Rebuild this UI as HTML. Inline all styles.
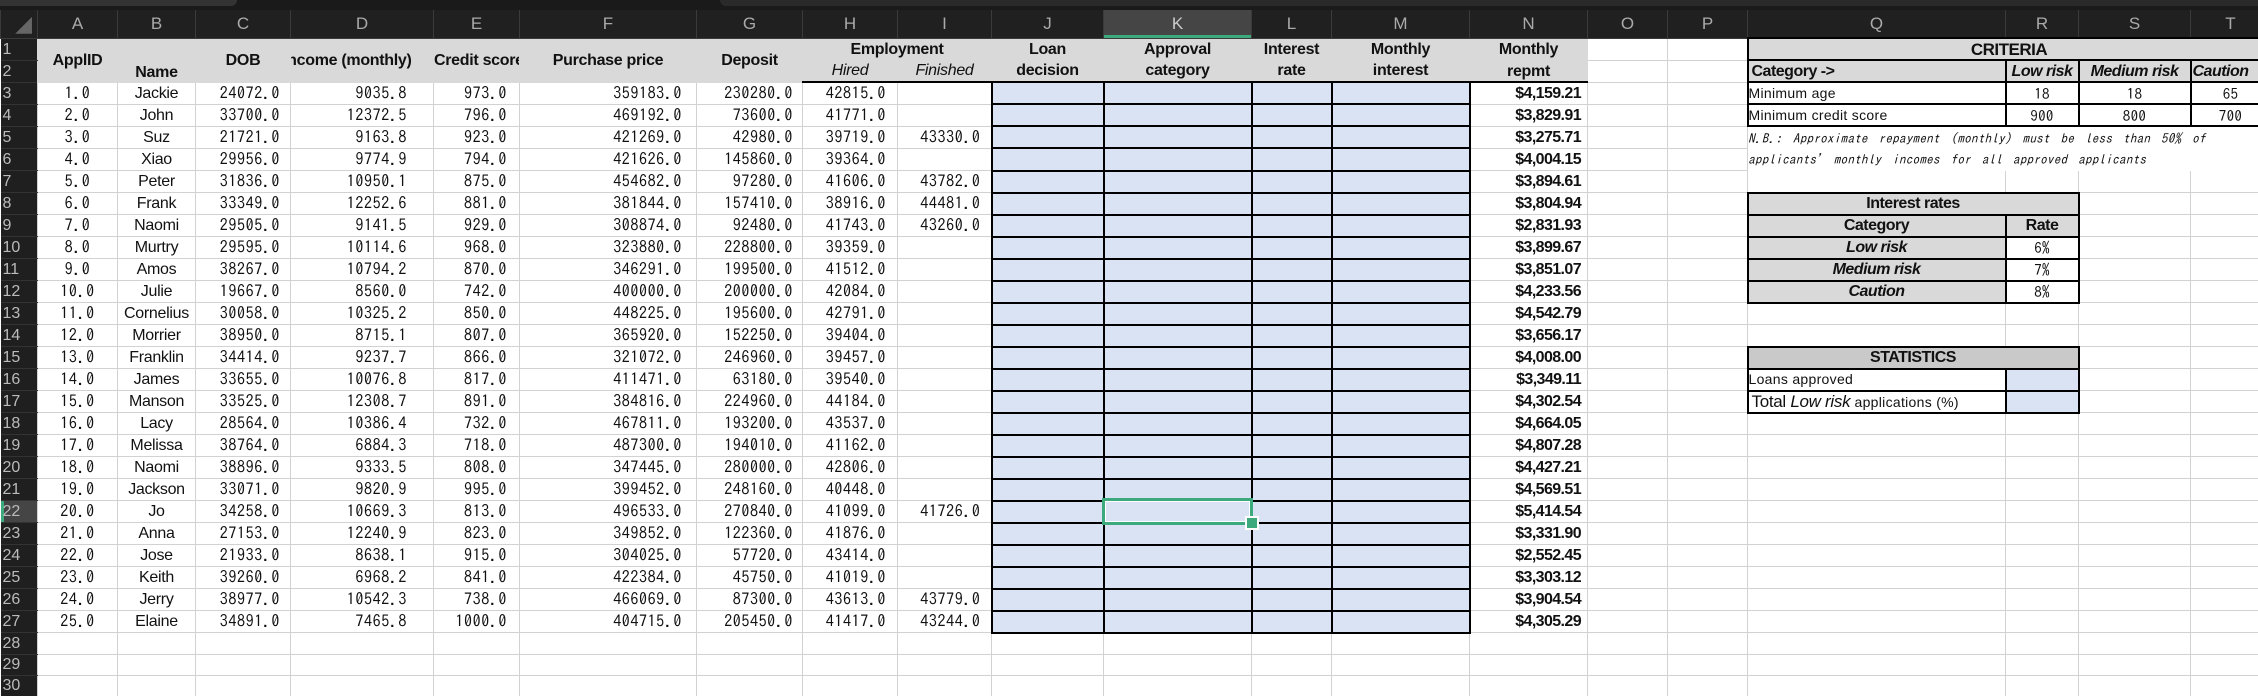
<!DOCTYPE html>
<html><head><meta charset="utf-8">
<style>
html,body{margin:0;padding:0;background:#fff;width:2258px;height:696px;overflow:hidden;position:relative}
#top{position:absolute;left:0;top:0;width:2258px;height:10px;background:#1a1a1a}
#tab{position:absolute;left:0;top:0;width:237px;height:6px;background:#333;border-radius:0 0 6px 0}
#tab2{position:absolute;left:720px;top:0;width:1538px;height:6px;background:#2a2a2a;border-radius:0 0 0 6px}
table{position:absolute;left:0;top:10px;border-collapse:collapse;table-layout:fixed;width:2270px}
td{border:1px solid #d2d2d2;padding:0;overflow:hidden;white-space:nowrap;height:20px;line-height:19px;font-family:"IPAGothic","Liberation Mono",monospace;font-size:16px;color:#111;letter-spacing:0.6px}
tr.ch td{background:#202020;color:#aaa;font-family:"Liberation Sans",sans-serif;font-size:17px;text-align:center;border:1px solid #3a3a3a;border-top:none;height:27px;letter-spacing:0}
tr.ch td:first-child{color:#666;font-size:22px;text-align:right;padding-right:5px}
tr.ch td.sel{background:#454545;box-shadow:inset 0 -3px 0 #3daa7d;color:#ccc}
td.rh{background:#1f1f1f;color:#bbb;font-family:"Liberation Sans",sans-serif;font-size:16px;border:none;border-bottom:1px solid #333;padding-left:2px;letter-spacing:0}
td.rh.sel{background:#454545;box-shadow:inset 3px 0 0 #3daa7d}
tr.hd td.g{background:#d9d9d9;font-family:"Liberation Sans",sans-serif;font-weight:bold;font-size:16px;text-align:center;border-color:#d9d9d9;letter-spacing:-0.3px;line-height:19px;color:#111}
tr.hd2 td.g{border-bottom:2px solid #000}
td.it{font-style:italic!important;font-weight:normal!important}
tr.d td:nth-child(2),tr.d td:nth-child(3){text-align:center}
tr.d td:nth-child(4){text-align:right;padding-right:10px}
tr.d td:nth-child(5){text-align:right;padding-right:26px}
tr.d td:nth-child(6){text-align:right;padding-right:12px}
tr.d td:nth-child(7){text-align:right;padding-right:14px}
tr.d td:nth-child(8){text-align:right;padding-right:9px}
tr.d td:nth-child(9){text-align:right;padding-right:11px}
tr.d td:nth-child(10){text-align:right;padding-right:10px}
tr.d td:nth-child(3){font-family:"Liberation Sans",sans-serif;font-size:16px;letter-spacing:-0.3px}
tr.d td:nth-child(11),tr.d td:nth-child(12),tr.d td:nth-child(13),tr.d td:nth-child(14){background:#dae3f3;border:2px solid #000}
tr.d td:nth-child(15){text-align:right;padding-right:6px;font-family:"Liberation Sans",sans-serif;font-weight:bold;font-size:16px;letter-spacing:-0.6px}
td.k{border:2px solid #000;font-family:"Liberation Sans",sans-serif;font-size:14px;letter-spacing:0.3px}
td.kg{background:#d9d9d9;font-weight:bold;font-size:16px;text-align:center;letter-spacing:-0.5px}
td.kd{background:#c9c9c9}
td.kc{text-align:center;font-family:"IPAGothic",sans-serif;font-size:15px}
td.kb{background:#dae3f3}
td.nb{font-family:"IPAGothic",sans-serif;font-style:italic;font-size:13px;line-height:21px;vertical-align:top;white-space:normal;border-color:transparent #d2d2d2;word-spacing:4px;letter-spacing:0.3px;padding-top:1px}
#selbox{position:absolute;left:1102px;top:498px;width:145px;height:21px;border:3px solid #3daa7d;box-shadow:inset 0 0 0 1px #fff}
#handle{position:absolute;left:1245px;top:516px;width:10px;height:10px;background:#3daa7d;border:2px solid #fff}
</style></head><body>
<div id="top"><div id="tab"></div><div id="tab2"></div></div>
<table>
<colgroup><col style="width:37px"><col style="width:80px"><col style="width:78px"><col style="width:95px"><col style="width:143px"><col style="width:86px"><col style="width:177px"><col style="width:106px"><col style="width:95px"><col style="width:94px"><col style="width:112px"><col style="width:148px"><col style="width:80px"><col style="width:138px"><col style="width:118px"><col style="width:80px"><col style="width:80px"><col style="width:258px"><col style="width:73px"><col style="width:112px"><col style="width:80px"></colgroup>
<tr class="ch"><td>◢</td><td>A</td><td>B</td><td>C</td><td>D</td><td>E</td><td>F</td><td>G</td><td>H</td><td>I</td><td>J</td><td class="sel">K</td><td>L</td><td>M</td><td>N</td><td>O</td><td>P</td><td>Q</td><td>R</td><td>S</td><td>T</td></tr>
<tr class="hd"><td class="rh">1</td><td class="g" rowspan="2">ApplID</td><td class="g" rowspan="2" style="vertical-align:bottom">Name</td><td class="g" rowspan="2">DOB</td><td class="g" rowspan="2" style="text-align:left;text-indent:-8px">Income (monthly)</td><td class="g" rowspan="2" style="text-align:left">Credit score</td><td class="g" rowspan="2">Purchase price</td><td class="g" rowspan="2">Deposit</td><td class="g" colspan="2">Employment</td><td class="g">Loan</td><td class="g">Approval</td><td class="g">Interest</td><td class="g">Monthly</td><td class="g">Monthly</td><td></td><td></td><td class="k kg" colspan="4" style="font-size:17px">CRITERIA</td></tr>
<tr class="hd hd2"><td class="rh">2</td><td class="g it">Hired</td><td class="g it">Finished</td><td class="g">decision</td><td class="g">category</td><td class="g">rate</td><td class="g">interest</td><td class="g" style="vertical-align:bottom">repmt</td><td></td><td></td><td class="k kg" style="text-align:left;padding-left:3px">Category -&gt;</td><td class="k kg" style="font-style:italic">Low risk</td><td class="k kg" style="font-style:italic">Medium risk</td><td class="k kg" style="font-style:italic;text-align:left;padding-left:1px">Caution</td></tr>
<tr class="d"><td class="rh">3</td><td>1.0</td><td>Jackie</td><td>24072.0</td><td>9035.8</td><td>973.0</td><td>359183.0</td><td>230280.0</td><td>42815.0</td><td></td><td></td><td></td><td></td><td></td><td>$4,159.21</td><td></td><td></td><td class="k">Minimum age</td><td class="k kc">18</td><td class="k kc">18</td><td class="k kc">65</td></tr>
<tr class="d"><td class="rh">4</td><td>2.0</td><td>John</td><td>33700.0</td><td>12372.5</td><td>796.0</td><td>469192.0</td><td>73600.0</td><td>41771.0</td><td></td><td></td><td></td><td></td><td></td><td>$3,829.91</td><td></td><td></td><td class="k">Minimum credit score</td><td class="k kc">900</td><td class="k kc">800</td><td class="k kc">700</td></tr>
<tr class="d"><td class="rh">5</td><td>3.0</td><td>Suz</td><td>21721.0</td><td>9163.8</td><td>923.0</td><td>421269.0</td><td>42980.0</td><td>39719.0</td><td>43330.0</td><td></td><td></td><td></td><td></td><td>$3,275.71</td><td></td><td></td><td class="nb" colspan="4" rowspan="2">N.B.: Approximate repayment (monthly) must be less than 50% of applicants' monthly incomes for all approved applicants</td></tr>
<tr class="d"><td class="rh">6</td><td>4.0</td><td>Xiao</td><td>29956.0</td><td>9774.9</td><td>794.0</td><td>421626.0</td><td>145860.0</td><td>39364.0</td><td></td><td></td><td></td><td></td><td></td><td>$4,004.15</td><td></td><td></td></tr>
<tr class="d"><td class="rh">7</td><td>5.0</td><td>Peter</td><td>31836.0</td><td>10950.1</td><td>875.0</td><td>454682.0</td><td>97280.0</td><td>41606.0</td><td>43782.0</td><td></td><td></td><td></td><td></td><td>$3,894.61</td><td></td><td></td><td></td><td></td><td></td><td></td></tr>
<tr class="d"><td class="rh">8</td><td>6.0</td><td>Frank</td><td>33349.0</td><td>12252.6</td><td>881.0</td><td>381844.0</td><td>157410.0</td><td>38916.0</td><td>44481.0</td><td></td><td></td><td></td><td></td><td>$3,804.94</td><td></td><td></td><td class="k kg" colspan="2">Interest rates</td><td></td><td></td></tr>
<tr class="d"><td class="rh">9</td><td>7.0</td><td>Naomi</td><td>29505.0</td><td>9141.5</td><td>929.0</td><td>308874.0</td><td>92480.0</td><td>41743.0</td><td>43260.0</td><td></td><td></td><td></td><td></td><td>$2,831.93</td><td></td><td></td><td class="k kg">Category</td><td class="k kg">Rate</td><td></td><td></td></tr>
<tr class="d"><td class="rh">10</td><td>8.0</td><td>Murtry</td><td>29595.0</td><td>10114.6</td><td>968.0</td><td>323880.0</td><td>228800.0</td><td>39359.0</td><td></td><td></td><td></td><td></td><td></td><td>$3,899.67</td><td></td><td></td><td class="k kg" style="font-style:italic">Low risk</td><td class="k kc">6%</td><td></td><td></td></tr>
<tr class="d"><td class="rh">11</td><td>9.0</td><td>Amos</td><td>38267.0</td><td>10794.2</td><td>870.0</td><td>346291.0</td><td>199500.0</td><td>41512.0</td><td></td><td></td><td></td><td></td><td></td><td>$3,851.07</td><td></td><td></td><td class="k kg" style="font-style:italic">Medium risk</td><td class="k kc">7%</td><td></td><td></td></tr>
<tr class="d"><td class="rh">12</td><td>10.0</td><td>Julie</td><td>19667.0</td><td>8560.0</td><td>742.0</td><td>400000.0</td><td>200000.0</td><td>42084.0</td><td></td><td></td><td></td><td></td><td></td><td>$4,233.56</td><td></td><td></td><td class="k kg" style="font-style:italic">Caution</td><td class="k kc">8%</td><td></td><td></td></tr>
<tr class="d"><td class="rh">13</td><td>11.0</td><td>Cornelius</td><td>30058.0</td><td>10325.2</td><td>850.0</td><td>448225.0</td><td>195600.0</td><td>42791.0</td><td></td><td></td><td></td><td></td><td></td><td>$4,542.79</td><td></td><td></td><td></td><td></td><td></td><td></td></tr>
<tr class="d"><td class="rh">14</td><td>12.0</td><td>Morrier</td><td>38950.0</td><td>8715.1</td><td>807.0</td><td>365920.0</td><td>152250.0</td><td>39404.0</td><td></td><td></td><td></td><td></td><td></td><td>$3,656.17</td><td></td><td></td><td></td><td></td><td></td><td></td></tr>
<tr class="d"><td class="rh">15</td><td>13.0</td><td>Franklin</td><td>34414.0</td><td>9237.7</td><td>866.0</td><td>321072.0</td><td>246960.0</td><td>39457.0</td><td></td><td></td><td></td><td></td><td></td><td>$4,008.00</td><td></td><td></td><td class="k kg kd" colspan="2">STATISTICS</td><td></td><td></td></tr>
<tr class="d"><td class="rh">16</td><td>14.0</td><td>James</td><td>33655.0</td><td>10076.8</td><td>817.0</td><td>411471.0</td><td>63180.0</td><td>39540.0</td><td></td><td></td><td></td><td></td><td></td><td>$3,349.11</td><td></td><td></td><td class="k">Loans approved</td><td class="k kb"></td><td></td><td></td></tr>
<tr class="d"><td class="rh">17</td><td>15.0</td><td>Manson</td><td>33525.0</td><td>12308.7</td><td>891.0</td><td>384816.0</td><td>224960.0</td><td>44184.0</td><td></td><td></td><td></td><td></td><td></td><td>$4,302.54</td><td></td><td></td><td class="k" style="padding-left:3px"><span style="font-family:'Liberation Sans',sans-serif;font-size:17px;letter-spacing:-0.3px">Total <i>Low risk</i></span> applications (%)</td><td class="k kb"></td><td></td><td></td></tr>
<tr class="d"><td class="rh">18</td><td>16.0</td><td>Lacy</td><td>28564.0</td><td>10386.4</td><td>732.0</td><td>467811.0</td><td>193200.0</td><td>43537.0</td><td></td><td></td><td></td><td></td><td></td><td>$4,664.05</td><td></td><td></td><td></td><td></td><td></td><td></td></tr>
<tr class="d"><td class="rh">19</td><td>17.0</td><td>Melissa</td><td>38764.0</td><td>6884.3</td><td>718.0</td><td>487300.0</td><td>194010.0</td><td>41162.0</td><td></td><td></td><td></td><td></td><td></td><td>$4,807.28</td><td></td><td></td><td></td><td></td><td></td><td></td></tr>
<tr class="d"><td class="rh">20</td><td>18.0</td><td>Naomi</td><td>38896.0</td><td>9333.5</td><td>808.0</td><td>347445.0</td><td>280000.0</td><td>42806.0</td><td></td><td></td><td></td><td></td><td></td><td>$4,427.21</td><td></td><td></td><td></td><td></td><td></td><td></td></tr>
<tr class="d"><td class="rh">21</td><td>19.0</td><td>Jackson</td><td>33071.0</td><td>9820.9</td><td>995.0</td><td>399452.0</td><td>248160.0</td><td>40448.0</td><td></td><td></td><td></td><td></td><td></td><td>$4,569.51</td><td></td><td></td><td></td><td></td><td></td><td></td></tr>
<tr class="d"><td class="rh sel">22</td><td>20.0</td><td>Jo</td><td>34258.0</td><td>10669.3</td><td>813.0</td><td>496533.0</td><td>270840.0</td><td>41099.0</td><td>41726.0</td><td></td><td></td><td></td><td></td><td>$5,414.54</td><td></td><td></td><td></td><td></td><td></td><td></td></tr>
<tr class="d"><td class="rh">23</td><td>21.0</td><td>Anna</td><td>27153.0</td><td>12240.9</td><td>823.0</td><td>349852.0</td><td>122360.0</td><td>41876.0</td><td></td><td></td><td></td><td></td><td></td><td>$3,331.90</td><td></td><td></td><td></td><td></td><td></td><td></td></tr>
<tr class="d"><td class="rh">24</td><td>22.0</td><td>Jose</td><td>21933.0</td><td>8638.1</td><td>915.0</td><td>304025.0</td><td>57720.0</td><td>43414.0</td><td></td><td></td><td></td><td></td><td></td><td>$2,552.45</td><td></td><td></td><td></td><td></td><td></td><td></td></tr>
<tr class="d"><td class="rh">25</td><td>23.0</td><td>Keith</td><td>39260.0</td><td>6968.2</td><td>841.0</td><td>422384.0</td><td>45750.0</td><td>41019.0</td><td></td><td></td><td></td><td></td><td></td><td>$3,303.12</td><td></td><td></td><td></td><td></td><td></td><td></td></tr>
<tr class="d"><td class="rh">26</td><td>24.0</td><td>Jerry</td><td>38977.0</td><td>10542.3</td><td>738.0</td><td>466069.0</td><td>87300.0</td><td>43613.0</td><td>43779.0</td><td></td><td></td><td></td><td></td><td>$3,904.54</td><td></td><td></td><td></td><td></td><td></td><td></td></tr>
<tr class="d"><td class="rh">27</td><td>25.0</td><td>Elaine</td><td>34891.0</td><td>7465.8</td><td>1000.0</td><td>404715.0</td><td>205450.0</td><td>41417.0</td><td>43244.0</td><td></td><td></td><td></td><td></td><td>$4,305.29</td><td></td><td></td><td></td><td></td><td></td><td></td></tr>
<tr class="e"><td class="rh" style="height:19px">28</td><td></td><td></td><td></td><td></td><td></td><td></td><td></td><td></td><td></td><td></td><td></td><td></td><td></td><td></td><td></td><td></td><td></td><td></td><td></td><td></td></tr>
<tr class="e"><td class="rh" style="height:19px">29</td><td></td><td></td><td></td><td></td><td></td><td></td><td></td><td></td><td></td><td></td><td></td><td></td><td></td><td></td><td></td><td></td><td></td><td></td><td></td><td></td></tr>
<tr class="e"><td class="rh" style="height:19px">30</td><td></td><td></td><td></td><td></td><td></td><td></td><td></td><td></td><td></td><td></td><td></td><td></td><td></td><td></td><td></td><td></td><td></td><td></td><td></td><td></td></tr>
</table>
<div id="selbox"></div><div id="handle"></div>
</body></html>
